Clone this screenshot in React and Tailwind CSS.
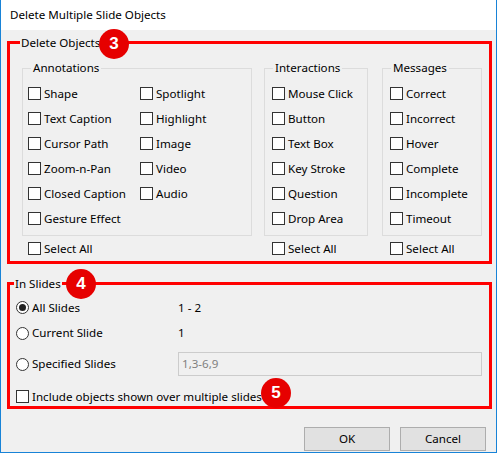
import React from "react";

const Check = ({label, h}) => (
    <div className={`flex items-center gap-[3px] ${h || "h-[25px]"}`}>
        <span className="w-[13px] h-[13px] bg-white border border-[#333] shrink-0"/>
        <span>{label}</span>
    </div>
);

const Radio = ({label, on}) => (
    <div className="flex items-center gap-[3px] w-[162px]">
        <span className="w-[13px] h-[13px] rounded-full bg-white border border-[#333] flex items-center justify-center shrink-0">
            {on && <span className="w-[7px] h-[7px] rounded-full bg-[#222]"/>}
        </span>
        <span>{label}</span>
    </div>
);

const Badge = ({n, cls}) => (
    <div className={`absolute w-[30px] h-[30px] rounded-full bg-[#e60000] text-white text-[17px] font-bold flex items-center justify-center ${cls}`}
         style={{fontFamily: "Liberation Sans, Arial, sans-serif"}}>
        {n}
    </div>
);

export default function App() {
    return (
        <div className="relative w-[497px] h-[453px] bg-white border-x border-b border-[#1883d7] text-[11.6px] text-black"
             style={{fontFamily: "'Noto Sans', 'Open Sans', sans-serif"}}>
            <div className="h-[30px] flex items-center pl-[9px]">Delete Multiple Slide Objects</div>
            <div className="bg-[#f0f0f0] h-[422px] pt-[4px] px-[6px]">
                {/* Delete Objects */}
                <fieldset className="border-[3px] border-[#f00] pl-[12px] pr-[7px] pb-0">
                    <legend className="px-[1px] ml-[-2px]">Delete Objects</legend>
                    <div className="flex gap-[12px] mt-[8px]">
                        <div className="w-[230px]">
                            <fieldset className="border border-[#dcdcdc] pl-[5px] pt-[4px] pb-[4px]">
                                <legend className="px-[2px] ml-[3px]">Annotations</legend>
                                <div className="grid grid-cols-[112px_1fr]">
                                    <Check label="Shape"/><Check label="Spotlight"/>
                                    <Check label="Text Caption"/><Check label="Highlight"/>
                                    <Check label="Cursor Path"/><Check label="Image"/>
                                    <Check label="Zoom-n-Pan"/><Check label="Video"/>
                                    <Check label="Closed Caption"/><Check label="Audio"/>
                                    <Check label="Gesture Effect"/>
                                </div>
                            </fieldset>
                            <div className="pl-[6px]"><Check label="Select All"/></div>
                        </div>
                        <div className="w-[104px]">
                            <fieldset className="border border-[#dcdcdc] pl-[7px] pt-[4px] pb-[4px]">
                                <legend className="px-[2px] ml-[1px]">Interactions</legend>
                                {["Mouse Click", "Button", "Text Box", "Key Stroke", "Question", "Drop Area"].map(l =>
                                    <Check key={l} label={l}/>)}
                            </fieldset>
                            <div className="pl-[8px]"><Check label="Select All"/></div>
                        </div>
                        <div className="w-[100px] ml-[2px]">
                            <fieldset className="border border-[#dcdcdc] pl-[7px] pt-[4px] pb-[4px]">
                                <legend className="px-[2px] ml-[1px]">Messages</legend>
                                {["Correct", "Incorrect", "Hover", "Complete", "Incomplete", "Timeout"].map(l =>
                                    <Check key={l} label={l}/>)}
                            </fieldset>
                            <div className="pl-[8px]"><Check label="Select All"/></div>
                        </div>
                    </div>
                </fieldset>

                {/* In Slides */}
                <fieldset className="mt-[11px] border-[3px] border-[#f00] pl-[6px] pr-[7px] pb-[1px]">
                    <legend className="px-[1px] ml-[-2px]">In Slides</legend>
                    <div className="flex items-center h-[25px] mt-[3px]"><Radio label="All Slides" on/><span>1 - 2</span></div>
                    <div className="flex items-center h-[26px]"><Radio label="Current Slide"/><span>1</span></div>
                    <div className="flex items-center h-[36px]">
                        <Radio label="Specified Slides"/>
                        <div className="w-[304px] h-[24px] border border-[#ccc] bg-[#f0f0f0] text-[#808080] flex items-center pl-[3px]">1,3-6,9</div>
                    </div>
                    <Check label="Include objects shown over multiple slides" h="h-[17px] mt-[6px]"/>
                </fieldset>

                <div className="flex justify-end gap-[10px] mt-[18px] pr-[4px]">
                    <button className="w-[86px] h-[24px] bg-[#e1e1e1] border border-[#adadad]">OK</button>
                    <button className="w-[86px] h-[24px] bg-[#e1e1e1] border border-[#adadad]">Cancel</button>
                </div>
            </div>
            <Badge n="3" cls="left-[98px] top-[29px]"/>
            <Badge n="4" cls="left-[65px] top-[269px]"/>
            <Badge n="5" cls="left-[260px] top-[378px]"/>
        </div>
    );
}
